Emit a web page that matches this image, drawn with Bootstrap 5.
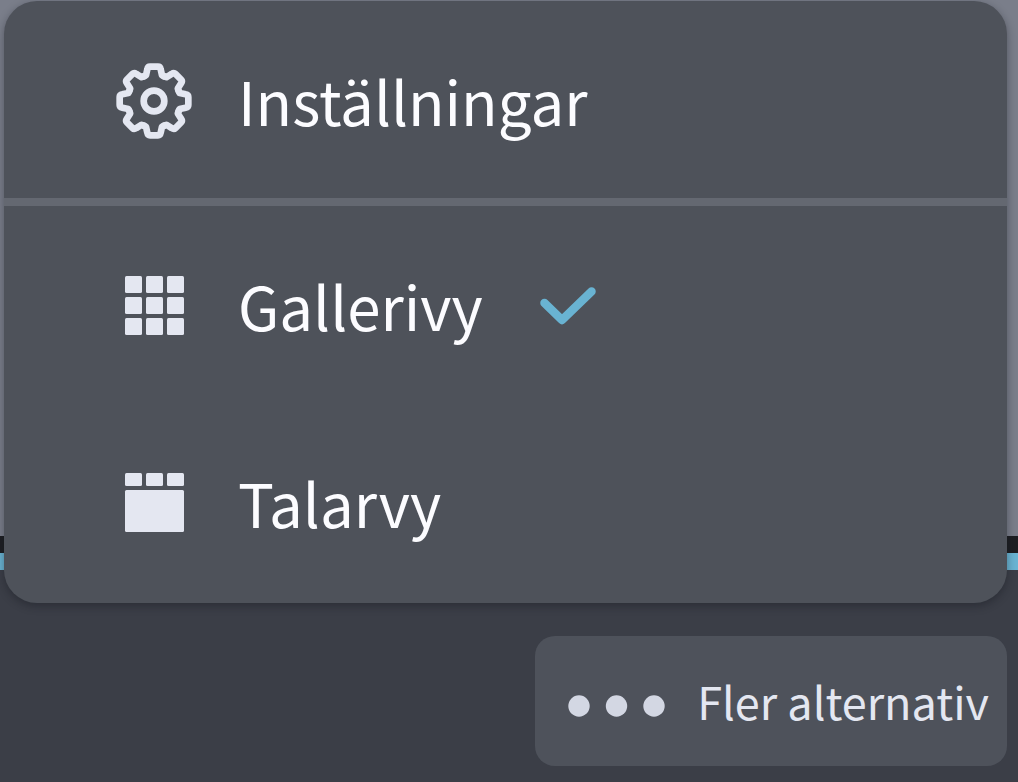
<!DOCTYPE html>
<html lang="sv">
<head>
<meta charset="utf-8">
<meta name="viewport" content="width=device-width, initial-scale=1">
<title>Fler alternativ</title>
<link href="https://cdn.jsdelivr.net/npm/bootstrap@5.3.0/dist/css/bootstrap.min.css" rel="stylesheet">
<style>
  body { font-family: "Noto Sans CJK SC", "Noto Sans", sans-serif; background: #3b3e47; }
  .stage { background: #7a7e8a; }
  .strip-dark { height: 17px; background: #1d1e22; }
  .strip-accent { height: 17px; background: #69b3d2; }
  .toolbar { height: 212px; padding: 0 11px 16px 4px; background: #3b3e47; }
  .more-btn { height: 130px; padding: 0 18px 0 33px; gap: 31px; border: 0; border-radius: 20px; background: #4e525b; color: #e4e7f1; font-size: 45px; line-height: 64px; }
  .more-btn:hover, .more-btn:focus { background: #4e525b; color: #e4e7f1; }
  .more-btn svg { margin-top: 10px; }
  .options { position: absolute; left: 4px; right: 11px; bottom: 179px; padding-bottom: 3px; border-radius: 33px; background: #4e525a; box-shadow: 0 3px 8px rgba(20, 22, 30, .4); }
  .option { height: 197px; width: 100%; padding: 3px 112px 0; border: 0; background: transparent; color: #fcfcff; font-size: 60px; line-height: 88px; text-align: left; }
  .option span { padding-bottom: 2px; }
  .glyph { width: 76px; height: 76px; margin-right: 46px; color: #e4e7f1; }
  .tick { width: 58px; height: 40px; margin-left: 56px; }
  .rule { height: 8px; background: #646871; }
</style>
</head>
<body>
<main class="d-flex flex-column vh-100 position-relative overflow-hidden">
  <div class="stage flex-grow-1"></div>
  <div class="strip-dark"></div>
  <div class="strip-accent"></div>
  <footer class="toolbar d-flex justify-content-end align-items-end">
    <button type="button" class="btn more-btn d-flex align-items-center text-nowrap" aria-expanded="true" aria-controls="options">
      <svg width="98" height="22" viewBox="0 0 98 22" fill="#d3d7e3" aria-hidden="true"><circle cx="11" cy="11" r="10.7"/><circle cx="48.500" cy="11" r="10.700"/><circle cx="86" cy="11" r="10.700"/></svg>
      <span>Fler alternativ</span>
    </button>
  </footer>
  <div class="options" id="options" role="menu">
    <button type="button" class="option d-flex align-items-center" role="menuitem">
      <svg class="glyph flex-shrink-0" viewBox="-114 -114 228 228" fill="none" stroke="currentColor" stroke-width="20" stroke-linecap="round" stroke-linejoin="round" aria-hidden="true">
        <defs><path id="tooth" d="M-30.600-73.900L-24-77L-20-95Q-18.500-103-12-103H12Q18.500-103 20-95L24-77L30.600-73.900"/></defs>
        <use href="#tooth"/><use href="#tooth" transform="rotate(45)"/><use href="#tooth" transform="rotate(90)"/><use href="#tooth" transform="rotate(135)"/><use href="#tooth" transform="rotate(180)"/><use href="#tooth" transform="rotate(225)"/><use href="#tooth" transform="rotate(270)"/><use href="#tooth" transform="rotate(315)"/>
        <circle r="31"/>
      </svg>
      <span>Inställningar</span>
    </button>
    <div class="rule" role="separator"></div>
    <button type="button" class="option d-flex align-items-center" role="menuitemradio" aria-checked="true">
      <svg class="glyph flex-shrink-0" viewBox="0 0 76 76" fill="currentColor" aria-hidden="true">
        <rect x="9" y="8" width="17" height="17" rx="1.500"/><rect x="30" y="8" width="17" height="17" rx="1.500"/><rect x="51" y="8" width="17" height="17" rx="1.500"/>
        <rect x="9" y="29" width="17" height="17" rx="1.500"/><rect x="30" y="29" width="17" height="17" rx="1.500"/><rect x="51" y="29" width="17" height="17" rx="1.500"/>
        <rect x="9" y="50" width="17" height="17" rx="1.500"/><rect x="30" y="50" width="17" height="17" rx="1.500"/><rect x="51" y="50" width="17" height="17" rx="1.500"/>
      </svg>
      <span>Gallerivy</span>
      <svg class="tick" viewBox="0 0 58 40" fill="none" stroke="#69b3d2" stroke-width="8.500" stroke-linecap="round" stroke-linejoin="round" aria-hidden="true"><path d="M5.500 17L23 34L52.500 5.500"/></svg>
    </button>
    <button type="button" class="option d-flex align-items-center" role="menuitemradio" aria-checked="false">
      <svg class="glyph flex-shrink-0" viewBox="0 0 76 76" fill="currentColor" aria-hidden="true">
        <rect x="9" y="8" width="17" height="13" rx="1.500"/><rect x="30" y="8" width="17" height="13" rx="1.500"/><rect x="51" y="8" width="17" height="13" rx="1.500"/>
        <rect x="9" y="25" width="59" height="42" rx="1.500"/>
      </svg>
      <span>Talarvy</span>
    </button>
  </div>
</main>
<script src="https://cdn.jsdelivr.net/npm/bootstrap@5.3.0/dist/js/bootstrap.bundle.min.js"></script>
</body>
</html>
